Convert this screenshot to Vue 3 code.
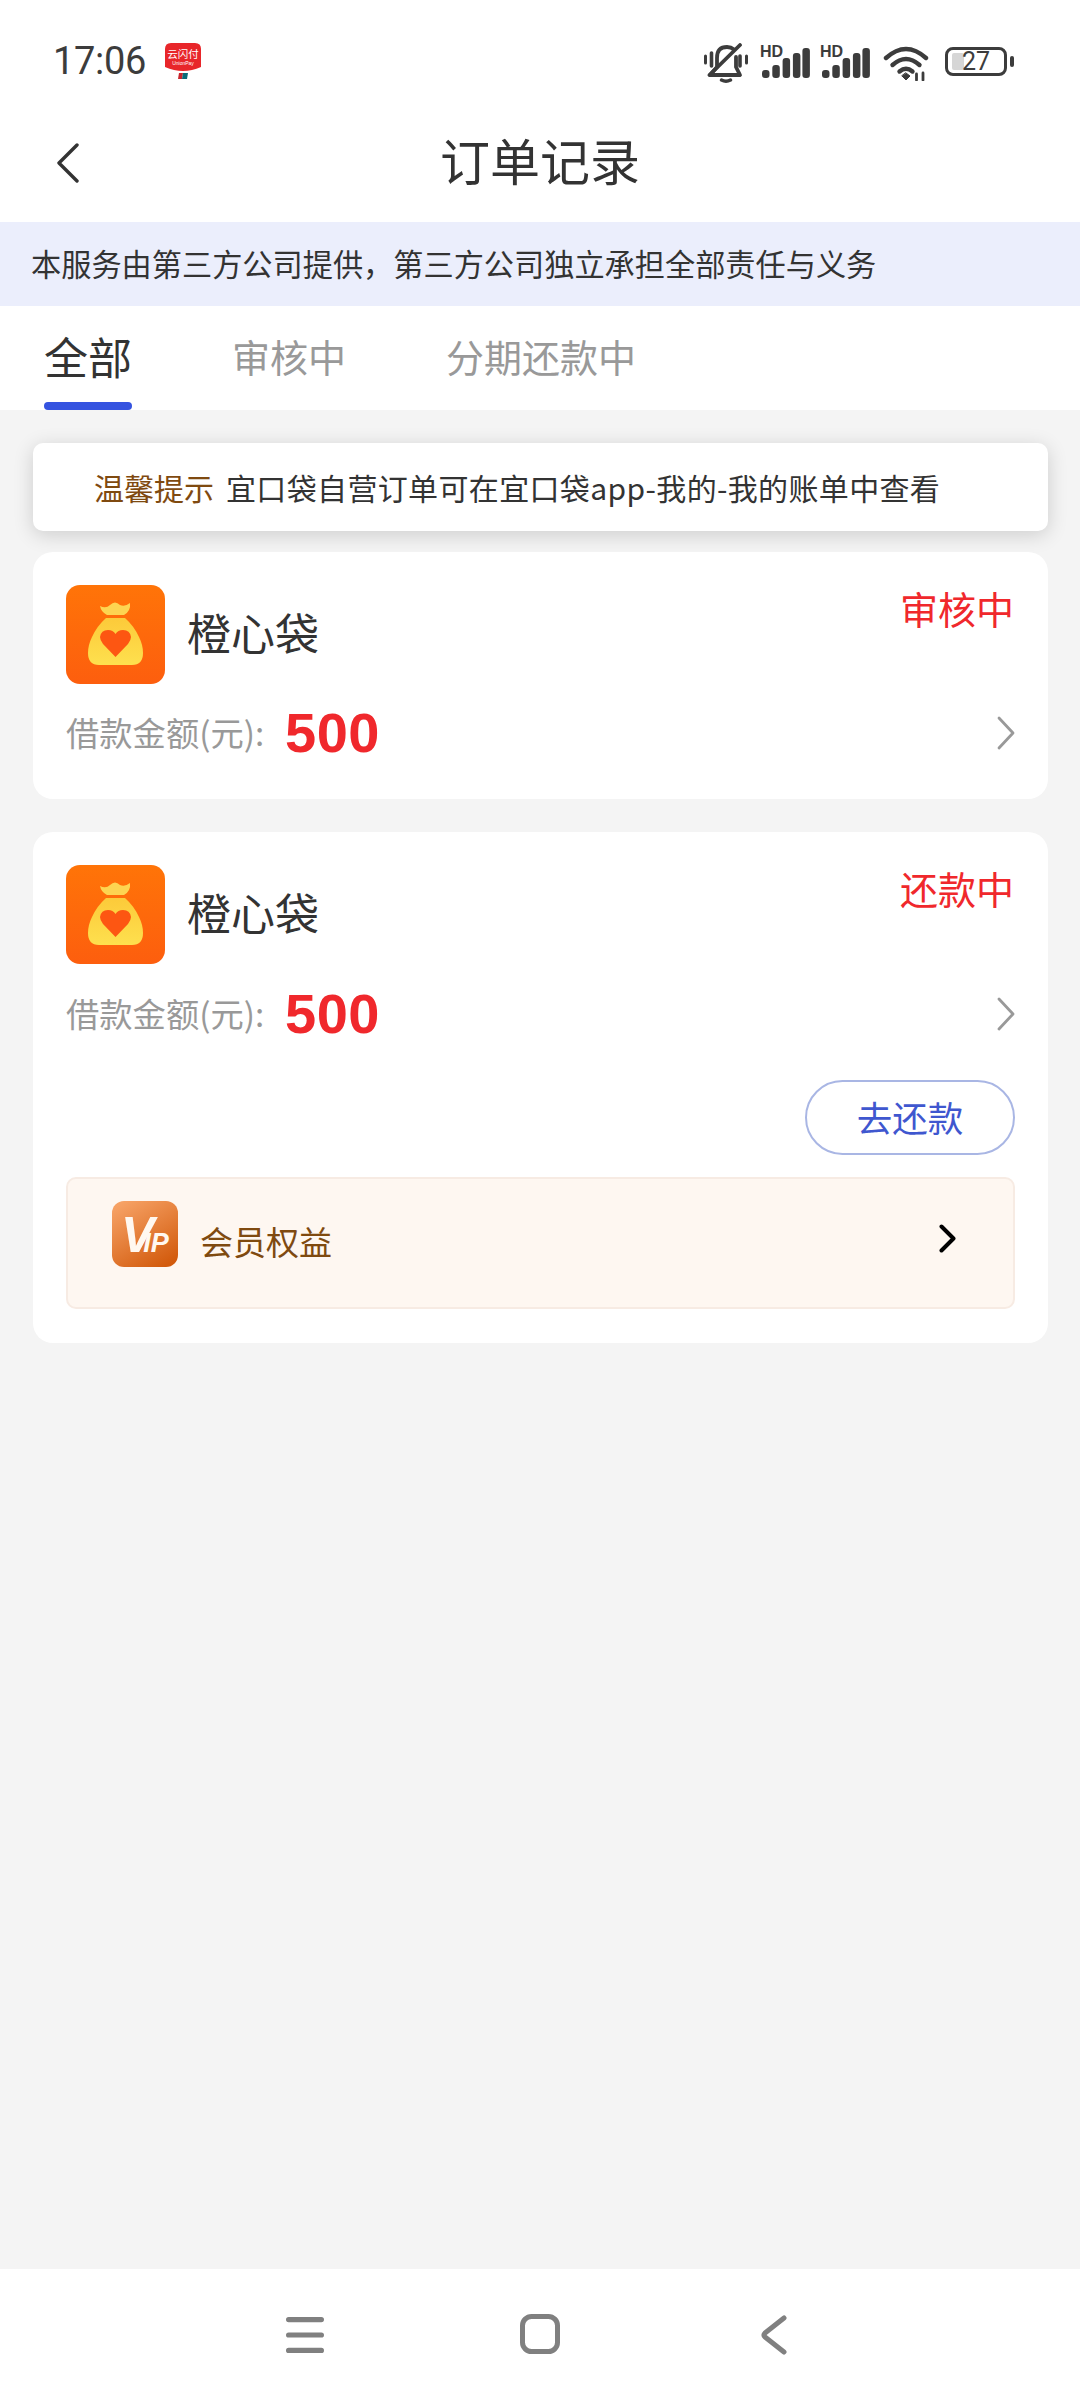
<script setup>
const cards = [
  { id: 1, status: '审核中', repay: false },
  { id: 2, status: '还款中', repay: true },
]
const tabs = ['全部', '审核中', '分期还款中']
</script>

<template>
  <div class="page">
    <div class="status-bar">
      <span class="time">17:06</span>
      <svg class="pay" width="36" height="36" viewBox="0 0 36 36">
        <path d="M6 0H30Q36 0 36 6V24Q27 28 18 28Q9 28 0 24V6Q0 0 6 0Z" fill="#e8262a" />
        <text x="18" y="15" text-anchor="middle" class="pay-a">云闪付</text>
        <text x="18" y="22" text-anchor="middle" class="pay-b">UnionPay</text>
        <path d="M14 30H18L17 36H13Z" fill="#c8252c" />
        <path d="M18 30H23L22 36H17Z" fill="#0b6b78" />
      </svg>
      <div class="spacer"></div>
      <svg class="bell" width="44" height="40" viewBox="0 0 44 40" fill="none" stroke="#3c3c3c" stroke-linecap="round" stroke-linejoin="round">
        <path d="M1.500 13V20M42.500 13V20" stroke-width="3" />
        <path d="M7.500 10V23" stroke-width="3.600" />
        <path d="M36 13V23" stroke-width="3.600" />
        <path d="M6 32L13 24V15Q13 4 23 4Q27 4 30 6.500M32 14V24L36 32H6" stroke-width="3.800" />
        <path d="M17.500 37Q22 39.500 26.500 37" stroke-width="3.400" />
        <path d="M5.500 32L36 2" stroke-width="3.800" />
      </svg>
      <div class="signal" v-for="n in 2" :key="n">
        <span class="hd">HD</span>
        <svg width="50" height="31" viewBox="0 0 50 31" fill="#3c3c3c">
          <rect x="2" y="23" width="7.500" height="8" rx="3" />
          <rect x="12.300" y="18" width="7.500" height="13" rx="3" />
          <rect x="22.600" y="11" width="7.500" height="20" rx="3" />
          <rect x="32.900" y="6" width="7.500" height="25" rx="3" />
          <rect x="42.400" y="1" width="7.500" height="30" rx="3" />
        </svg>
      </div>
      <svg class="wifi" width="46" height="35" viewBox="0 0 46 35" fill="none" stroke="#3c3c3c" stroke-width="4.400" stroke-linecap="round">
        <path d="M3 12Q23 -6 43 12" />
        <path d="M9.500 19Q23 7 36.500 19" />
        <path d="M16.500 25.500Q23 20 29.500 25.500" />
        <path d="M19 30L23 34L27 30L23 27Z" fill="#3c3c3c" stroke-width="1" />
        <path d="M33.500 28V34M40 27V34" stroke-width="2.800" />
      </svg>
      <div class="battery">
        <div class="battery-fill"></div>
        <span class="battery-num">27</span>
      </div>
      <div class="battery-nub"></div>
    </div>

    <header class="header">
      <svg class="back" width="24" height="40" viewBox="0 0 24 40" fill="none" stroke="#333" stroke-width="3.400" stroke-linecap="round" stroke-linejoin="round">
        <path d="M21 2L3 20L21 38" />
      </svg>
      <h1 class="title">订单记录</h1>
    </header>

    <div class="banner">本服务由第三方公司提供，第三方公司独立承担全部责任与义务</div>

    <nav class="tabs">
      <div class="tab" v-for="(tab, i) in tabs" :key="tab" :class="{ active: i === 0 }">
        <span class="tab-text">{{ tab }}</span>
        <i class="indicator"></i>
      </div>
    </nav>

    <main class="main">
      <div class="tip">
        <span class="tip-head">温馨提示</span>
        <span class="tip-body">宜口袋自营订单可在宜口袋app-我的-我的账单中查看</span>
      </div>

      <section class="card" v-for="card in cards" :key="card.id">
        <div class="top">
          <svg class="app" width="99" height="99" viewBox="0 0 99 99">
            <defs>
              <linearGradient id="appBg" x1="0" y1="0" x2="0" y2="1">
                <stop offset="0" stop-color="#ff7408" />
                <stop offset="1" stop-color="#fd5e0e" />
              </linearGradient>
              <linearGradient id="bagBg" x1="0" y1="0" x2="0" y2="1">
                <stop offset="0" stop-color="#fcca3a" />
                <stop offset="1" stop-color="#fee04e" />
              </linearGradient>
            </defs>
            <rect width="99" height="99" rx="14" fill="url(#appBg)" />
            <path d="M34 21Q40 24 44 20Q49 15 54 20Q59 22 64 18Q65 26 58 30H41Q35 27 34 21Z" fill="#fdd451" />
            <path d="M40 33H59Q68 41 73 52Q77 60 77 68Q77 80 66 80H33Q22 80 22 68Q22 60 26 52Q31 41 40 33Z" fill="url(#bagBg)" />
            <path d="M49.500 72L37 59Q34 55 34 52Q35 45 42 45Q47 45 49.500 49Q52 45 57 45Q64 45 65 52Q65 55 62 59Z" fill="#fd5612" />
          </svg>
          <span class="name">橙心袋</span>
          <span class="status">{{ card.status }}</span>
        </div>
        <div class="amount-row">
          <span class="label">借款金额(元):</span>
          <span class="amount">500</span>
          <svg class="chev" width="20" height="34" viewBox="0 0 20 34" fill="none" stroke="#999" stroke-width="2.800" stroke-linecap="round" stroke-linejoin="round">
            <path d="M3 2L17 17L3 32" />
          </svg>
        </div>
        <template v-if="card.repay">
          <div class="actions">
            <button class="repay">去还款</button>
          </div>
          <div class="vip">
            <svg class="vip-icon" width="66" height="66" viewBox="0 0 66 66">
              <defs>
                <linearGradient id="vipBg" x1="0.200" y1="0" x2="0.800" y2="1">
                  <stop offset="0" stop-color="#f6a164" />
                  <stop offset="1" stop-color="#d25a0c" />
                </linearGradient>
              </defs>
              <rect width="66" height="66" rx="12" fill="url(#vipBg)" />
              <text x="9" y="51" class="vip-v">V<tspan dx="-11" class="vip-ip">IP</tspan></text>
            </svg>
            <span class="vip-text">会员权益</span>
            <svg class="vip-chev" width="17" height="29" viewBox="0 0 17 29" fill="none" stroke="#000" stroke-width="4" stroke-linecap="round" stroke-linejoin="round">
              <path d="M2.500 2.500L14.500 14.500L2.500 26.500" />
            </svg>
          </div>
        </template>
      </section>
    </main>

    <footer class="nav">
      <svg class="nav-menu" width="38" height="36" viewBox="0 0 38 36" fill="none" stroke="#808080" stroke-width="5.200" stroke-linecap="round">
        <path d="M2.600 2.600H35.400M2.600 18H35.400M2.600 33.400H35.400" />
      </svg>
      <svg width="40" height="40" viewBox="0 0 40 40" fill="none" stroke="#808080" stroke-width="5">
        <rect x="2.500" y="2.500" width="35" height="35" rx="9" />
      </svg>
      <svg class="nav-back" width="26" height="40" viewBox="0 0 26 40" fill="none" stroke="#808080" stroke-width="5" stroke-linecap="round" stroke-linejoin="round">
        <path d="M23 3L4 18Q2 20 4 22L23 37" />
      </svg>
    </footer>
  </div>
</template>

<style>
html, body { margin: 0; background: #f4f4f4; }
</style>

<style scoped>
.page {
  width: 1080px;
  height: 2400px;
  display: flex;
  flex-direction: column;
  background: #f4f4f4;
  font-family: "Noto Sans CJK SC", "Noto Sans", sans-serif;
  color: #333;
  overflow: hidden;
}
.status-bar {
  height: 100px;
  flex: none;
  box-sizing: border-box;
  padding: 40px 66px 0 53px;
  background: #fff;
  display: flex;
  align-items: flex-start;
}
.time {
  font-family: Roboto, "Noto Sans", sans-serif;
  font-size: 38px;
  font-weight: 400;
  line-height: 42px;
  color: #3c3c3c;
  letter-spacing: -0.3px;
  width: 112px;
}
.pay { margin-top: 3px; }
.pay-a { font-size: 10.500px; fill: #fff; font-family: "Noto Sans CJK SC", sans-serif; }
.pay-b { font-size: 5px; fill: #fff; font-family: "Liberation Sans", sans-serif; }
.spacer { flex: 1; }
.bell { margin: 3px 12px 0 0; }
.signal {
  width: 50px;
  height: 31px;
  margin: 7px 10px 0 0;
  display: flex;
  position: relative;
}
.hd {
  position: absolute;
  left: 0;
  top: -2px;
  font: bold 16px/14px "Liberation Sans", sans-serif;
  color: #3c3c3c;
}
.wifi { margin: 6px 16px 0 3px; }
.battery {
  width: 62px;
  height: 29px;
  margin-top: 7px;
  box-sizing: border-box;
  border: 3px solid #3c3c3c;
  border-radius: 8px;
  display: flex;
  align-items: center;
  position: relative;
  padding: 3px 4px;
}
.battery-fill {
  width: 12px;
  height: 100%;
  background: #d6d6d6;
  border-radius: 2px;
}
.battery-num {
  position: absolute;
  left: 0;
  right: 0;
  top: -3px;
  text-align: center;
  font: 25px/29px Roboto, sans-serif;
  color: #3c3c3c;
}
.battery-nub {
  width: 4px;
  height: 11px;
  margin: 16px 0 0 3px;
  background: #3c3c3c;
  border-radius: 2px;
}
.header {
  height: 122px;
  flex: none;
  background: #fff;
  display: flex;
  align-items: center;
  justify-content: center;
  position: relative;
}
.back { position: absolute; left: 56px; top: 43px; }
.title {
  margin: 0 0 4px;
  font-size: 50px;
  font-weight: 400;
  line-height: 60px;
  letter-spacing: 0;
  color: #333;
}
.banner {
  height: 84px;
  flex: none;
  box-sizing: border-box;
  padding-left: 31px;
  background: #ebeefc;
  font-size: 30.200px;
  line-height: 82px;
  color: #333;
}
.tabs {
  height: 104px;
  flex: none;
  box-sizing: border-box;
  padding-left: 44px;
  background: #fff;
  display: flex;
  gap: 100px;
}
.tab {
  display: flex;
  flex-direction: column;
  color: #999;
  font-size: 38px;
}
.tab.active { color: #333; font-size: 44px; }
.tab-text {
  flex: 1;
  display: flex;
  align-items: center;
  padding-top: 4px;
  line-height: 1;
  white-space: nowrap;
}
.indicator {
  height: 8px;
  border-radius: 4px;
}
.tab.active .indicator { background: #3553e0; }
.main {
  flex: 1;
  box-sizing: border-box;
  padding: 33px 32px 0 33px;
  display: flex;
  flex-direction: column;
}
.tip {
  height: 88px;
  flex: none;
  box-sizing: border-box;
  padding-left: 61px;
  background: #fff;
  border-radius: 10px;
  box-shadow: 0 4px 20px rgba(0, 0, 0, 0.16);
  display: flex;
  align-items: center;
  font-size: 30px;
  white-space: nowrap;
}
.tip-head { color: #7f4a10; margin-right: 12px; }
.tip-body { color: #333; letter-spacing: 0.35px; }
.card {
  margin-top: 21px;
  background: #fff;
  border-radius: 20px;
  box-sizing: border-box;
  padding: 33px 33px 31px;
  display: flex;
  flex-direction: column;
}
.card + .card { margin-top: 33px; padding-bottom: 34px; }
.card + .card .amount-row { margin-top: 15px; }
.top {
  display: flex;
  align-items: flex-start;
}
.name {
  margin: -2px 0 0 22px;
  font-size: 44px;
  line-height: 99px;
  color: #333;
}
.status {
  margin: -2px 0 0 auto;
  padding-right: 1px;
  font-size: 38px;
  line-height: 50px;
  color: #f0282c;
}
.amount-row {
  height: 70px;
  margin-top: 14px;
  display: flex;
  align-items: center;
}
.label {
  font-size: 33.300px;
  color: #999;
  width: 220px;
  padding-bottom: 4px;
  white-space: nowrap;
}
.amount {
  font-family: "Liberation Sans", Arial, sans-serif;
  font-weight: 700;
  font-size: 56px;
  letter-spacing: 0.5px;
  color: #f0282c;
  margin: -2px 0 0 -1px;
}
.chev { margin: 0 -1px 0 auto; }
.actions {
  margin-top: 31px;
  display: flex;
  justify-content: flex-end;
}
.repay {
  width: 210px;
  height: 75px;
  padding: 0 0 3px;
  box-sizing: border-box;
  background: #fff;
  border: 2px solid #a9b6e4;
  border-radius: 38px;
  font-family: inherit;
  font-size: 35.500px;
  color: #3f57cf;
}
.vip {
  height: 132px;
  margin-top: 22px;
  box-sizing: border-box;
  padding: 0 57px 0 44px;
  background: #fef7f1;
  border: 2px solid #f7ebe3;
  border-radius: 10px;
  display: flex;
  align-items: center;
}
.vip-icon { margin-bottom: 18px; }
.vip-v { font: italic 700 50px "Liberation Sans", sans-serif; fill: #fff8f0; }
.vip-ip { font-size: 27px; }
.vip-text {
  margin: 0 0 4px 22px;
  font-size: 33px;
  color: #7f4a10;
}
.vip-chev { margin: 0 0 10px auto; }
.nav {
  height: 131px;
  flex: none;
  background: #fff;
  box-sizing: border-box;
  padding: 45px 0 0 286px;
  display: flex;
  align-items: flex-start;
  gap: 196px;
}
.nav-menu { margin-top: 3px; }
.nav-back { margin: 1px 0 0 5px; }
</style>
